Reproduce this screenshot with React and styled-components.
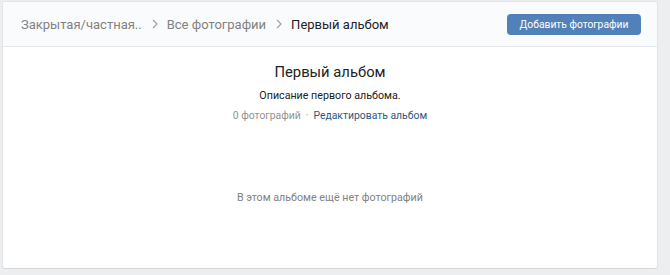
import React from "react";
import styled, { createGlobalStyle } from "styled-components";

const Global = createGlobalStyle`
  html, body { margin: 0; padding: 0; background: #edeef0; }
  body { font-family: Roboto, "Open Sans", Arial, sans-serif; -webkit-font-smoothing: antialiased; }
`;

const Page = styled.div`
  padding: 2px 13px 7px 3px;
  width: 670px;
  height: 275px;
  box-sizing: border-box;
`;

const Card = styled.div`
  background: #fff;
  border-radius: 2px;
  box-shadow: 0 1px 0 0 #d7d8db, 0 0 0 1px #e3e4e8;
  height: 100%;
  display: flex;
  flex-direction: column;
`;

const Header = styled.div`
  height: 44px;
  background: #fafbfc;
  border-bottom: 1px solid #e7e8ec;
  display: flex;
  align-items: center;
  padding: 0 16px 0 18px;
  border-radius: 2px 2px 0 0;
`;

const Crumbs = styled.div`
  display: flex;
  align-items: center;
  flex: 1;
  font-size: 13px;
`;

const Crumb = styled.span`
  color: ${(p) => (p.$current ? "#222222" : "#828282")};
`;

const Sep = styled.svg`
  margin: 0 9px 0 10px;
  display: block;
`;

const Button = styled.button`
  background: #5181b8;
  color: #fff;
  border: 0;
  border-radius: 4px;
  font-family: inherit;
  font-size: 10.3px;
  height: 21px;
  width: 134px;
  padding: 0;
  line-height: 21px;
  margin-top: 1px;
`;

const Body = styled.div`
  display: flex;
  flex-direction: column;
  align-items: center;
  padding-top: 15px;
`;

const Title = styled.div`
  font-size: 14.8px;
  color: #222;
  line-height: 20px;
`;

const Desc = styled.div`
  margin-top: 6px;
  font-size: 10.7px;
  color: #222;
  line-height: 16px;
`;

const Meta = styled.div`
  margin-top: 4px;
  font-size: 10.4px;
  line-height: 16px;
  color: #939393;
  display: flex;
  gap: 5px;
`;

const Link = styled.span`
  color: #2a5885;
`;

const Empty = styled.div`
  margin-top: 66px;
  font-size: 10.7px;
  color: #828282;
  line-height: 16px;
`;

const Chevron = () => (
  <Sep width="6" height="10" viewBox="0 0 6 10">
    <path d="M1 1l4 4L1 9" fill="none" stroke="#a0a3a8" strokeWidth="1.2" />
  </Sep>
);

export default function App() {
  return (
    <>
      <Global />
      <Page>
        <Card>
          <Header>
            <Crumbs>
              <Crumb>Закрытая/частная..</Crumb>
              <Chevron />
              <Crumb>Все фотографии</Crumb>
              <Chevron />
              <Crumb $current>Первый альбом</Crumb>
            </Crumbs>
            <Button>Добавить фотографии</Button>
          </Header>
          <Body>
            <Title>Первый альбом</Title>
            <Desc>Описание первого альбома.</Desc>
            <Meta>
              <span>0 фотографий</span>
              <span>·</span>
              <Link>Редактировать альбом</Link>
            </Meta>
            <Empty>В этом альбоме ещё нет фотографий</Empty>
          </Body>
        </Card>
      </Page>
    </>
  );
}
